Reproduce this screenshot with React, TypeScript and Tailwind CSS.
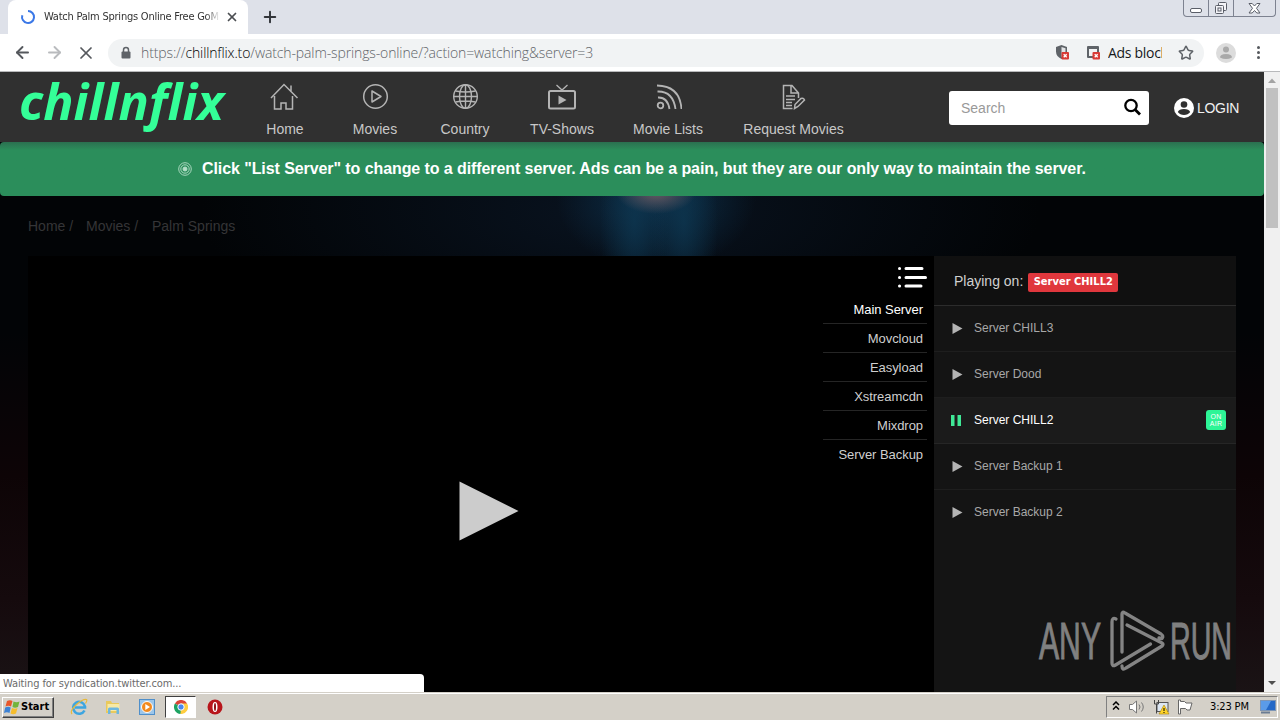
import type { ReactNode } from "react";
import { ArrowLeft, ArrowRight, Plus, Star, X } from "lucide-react";

const tahoma = "font-['DejaVu_Sans_Condensed','DejaVu_Sans',sans-serif] [font-stretch:condensed]";

const openSans = "font-['Open_Sans',sans-serif] [font-stretch:normal]";

function HomeIcon() {
  return (
    <svg width="30" height="28" viewBox="0 0 30 28" fill="none" stroke="#b4b4b4" strokeWidth="1.5">
      <path d="M1 15 14 1.500 27.500 15M4.500 13v13h6.500v-6h5v6h6.500V13M21 8V2.500" />
    </svg>
  );
}

function MoviesIcon() {
  return (
    <svg width="28" height="28" viewBox="0 0 28 28" fill="none" stroke="#b4b4b4" strokeWidth="1.500">
      <circle cx="14.500" cy="13.500" r="11.800" />
      <path d="M11 8v11l9-5.500z" strokeLinejoin="round" />
    </svg>
  );
}

function CountryIcon() {
  return (
    <svg width="28" height="28" viewBox="0 0 28 28" fill="none" stroke="#b4b4b4" strokeWidth="1.400">
      <circle cx="14.500" cy="13.500" r="11.800" />
      <ellipse cx="14.500" cy="13.500" rx="6" ry="11.800" />
      <path d="M14.500 1.500v24M2.500 13.500h24M4.500 8q10 2 20 0M4.500 19q10-2 20 0" />
    </svg>
  );
}

function TvIcon() {
  return (
    <svg width="30" height="28" viewBox="0 0 30 28" fill="none" stroke="#b4b4b4" strokeWidth="2">
      <rect x="2" y="8" width="26" height="17.500" rx="1.500" />
      <path d="M9.500 2 15 7l5.500-5" strokeWidth="1.300" />
      <path d="M11.500 12.500v9l8-4.500z" fill="#b4b4b4" stroke="none" />
    </svg>
  );
}

function FeedIcon() {
  return (
    <svg width="28" height="28" viewBox="0 0 28 28" fill="none" stroke="#b4b4b4" strokeWidth="1.800">
      <circle cx="6.500" cy="22.500" r="2.800" />
      <path d="M4 14.500q9.500-.500 11.500 11.500M3.500 8.500q15.500-.500 18 17.500M3 2.500q23 .500 24.500 23.500" />
    </svg>
  );
}

function RequestIcon() {
  return (
    <svg width="26" height="28" viewBox="0 0 26 28" fill="none" stroke="#b4b4b4" strokeWidth="1.500">
      <path d="M11.500 25.500H2.500v-23H11l6.500 7.500V15M10 2.500v7.500h7.500M5 13h9M5 16.500h9M5 19.500h6M5 22.500h6" />
      <path d="m13.500 25.500.500-4 6-6q2.500-1 3.500 1.500l-6.500 6.500z" />
    </svg>
  );
}

const navItems = [
  { label: "Home", icon: <HomeIcon />, width: "w-[90px]" },
  { label: "Movies", icon: <MoviesIcon />, width: "w-[90px]" },
  { label: "Country", icon: <CountryIcon />, width: "w-[90px]" },
  { label: "TV-Shows", icon: <TvIcon />, width: "w-[104px]" },
  { label: "Movie Lists", icon: <FeedIcon />, width: "w-[108px]" },
  { label: "Request Movies", icon: <RequestIcon />, width: "w-[143px]" },
];

const mirrors = ["Main Server", "Movcloud", "Easyload", "Xstreamcdn", "Mixdrop", "Server Backup"];

const servers = ["Server CHILL3", "Server Dood", "Server CHILL2", "Server Backup 1", "Server Backup 2"];

function WindowButtons() {
  return (
    <div className="mr-[4px] flex h-[17px] w-[93px] rounded-b-[4px] border border-t-0 border-[#7d8290]">
      <div className="flex w-[25px] items-end justify-center border-r border-[#7d8290] pb-[3px]">
        <div className="h-[5px] w-[12px] rounded-[2px] border border-[#5a5e68] bg-white" />
      </div>
      <div className="flex w-[25px] items-center justify-center border-r border-[#7d8290]">
        <svg width="14" height="13" viewBox="0 0 14 13" fill="#f4f4f8" stroke="#5a5e68">
          <rect x="4.500" y=".500" width="8" height="8" rx="1" />
          <rect x="1.500" y="3.500" width="8" height="8" rx="1" />
          <rect x="4" y="6" width="3" height="3" />
        </svg>
      </div>
      <div className="flex flex-1 items-center justify-center">
        <svg width="13" height="11" viewBox="0 0 13 11" fill="#fff" stroke="#5a5e68">
          <path d="M1 .5h3.200l2.300 2.500L8.800.5H12L8.500 5.300l3.500 4.700H8.800L6.500 7.500 4.200 10H1l3.500-4.700z" />
        </svg>
      </div>
    </div>
  );
}

function TabStrip() {
  return (
    <div className="flex h-[34px] shrink-0 items-start bg-[#dee1e9]">
      <div className={`ml-[8px] flex h-[34px] w-[240px] items-center rounded-t-[8px] bg-white pl-[12px] ${tahoma}`}>
        <svg width="16" height="16" viewBox="0 0 16 16" fill="none" stroke="#3b78e7" strokeWidth="2">
          <path d="M8 2a6 6 0 1 1-5.700 4.200" />
        </svg>
        <div className="ml-[8px] w-[176px] overflow-hidden text-[11px] tracking-[-0.23px] whitespace-nowrap text-[#333] [mask-image:linear-gradient(to_right,#000_92%,transparent)]">
          Watch Palm Springs Online Free GoM
        </div>
        <X className="ml-[5px] size-[14px] text-[#4b4e52]" strokeWidth={3} />
      </div>
      <Plus className="mt-[8px] ml-[13px] size-[18px] text-[#33363b]" strokeWidth={2.6} />
      <div className="flex-1" />
      <WindowButtons />
    </div>
  );
}

function BlockedBadge() {
  return (
    <g>
      <rect x="6.500" y="8" width="7.500" height="7.500" rx="1" fill="#d93a35" />
      <path d="m8.700 10.200 3 3m0-3-3 3" stroke="#fff" strokeWidth="1.300" />
    </g>
  );
}

function AddressBar() {
  return (
    <div className="flex h-[38px] shrink-0 items-center border-b border-[#b8b9bb] bg-white text-[#5f6368]">
      <ArrowLeft className="ml-[13px] size-[19px] text-[#55585d]" strokeWidth={2.4} />
      <ArrowRight className="ml-[13px] size-[19px] text-[#b9bbbe]" strokeWidth={2.4} />
      <X className="ml-[12px] size-[20px] text-[#55585d]" strokeWidth={2.1} />
      <div className="ml-[12px] flex h-[28px] w-[1096px] items-center rounded-full bg-[#f1f3f4] pl-[13px]">
        <svg width="10" height="14" viewBox="0 0 10 14">
          <path d="M2.500 6V4a2.500 2.500 0 0 1 5 0v2" fill="none" stroke="#5f6368" strokeWidth="1.500" />
          <rect x=".500" y="5.500" width="9" height="7" rx="1" fill="#5f6368" />
        </svg>
        <div className={`ml-[10px] w-[900px] text-[14px] font-light tracking-[-0.12px] whitespace-nowrap text-[#5f6368] ${openSans}`}>
          https://<span className="text-black">chillnflix.to</span>/watch-palm-springs-online/?action=watching&amp;server=3
        </div>
        <svg className="ml-[14px] shrink-0" width="16" height="17" viewBox="0 0 16 17">
          <path d="M6.500 1 1 3v4.500q0 5 5.500 7.500 5.500-2.500 5.500-7.500V3z" fill="#5f6368" />
          <path d="M6.500 3v10q4-2 4-6V4.300z" fill="#e2e4e6" />
          <BlockedBadge />
        </svg>
        <svg className="ml-[15px] shrink-0" width="16" height="17" viewBox="0 0 16 17">
          <path d="M1 3q0-1 1-1h10q1 0 1 1v6h-2V5H3v7h4v2H2q-1 0-1-1z" fill="#5f6368" />
          <BlockedBadge />
        </svg>
        <div className={`ml-[6px] w-[54px] shrink-0 overflow-hidden text-[14px] tracking-[-0.3px] whitespace-nowrap text-[#17191c] ${openSans}`}>
          Ads block
        </div>
        <Star className="ml-[16px] size-[16px] shrink-0" strokeWidth={2.3} />
      </div>
      <svg className="ml-[12px]" width="20" height="20" viewBox="0 0 20 20">
        <circle cx="10" cy="10" r="10" fill="#dcdcdc" />
        <circle cx="10" cy="6.500" r="3" fill="#a9a9a9" />
        <path d="M4 14.500q0-3.500 6-3.500t6 3.500q-6 3-12 0" fill="#a9a9a9" />
      </svg>
      <div className="ml-[21px] flex flex-col gap-[2px]">
        <i className="size-[3px] rounded-full bg-[#55585d]" />
        <i className="size-[3px] rounded-full bg-[#55585d]" />
        <i className="size-[3px] rounded-full bg-[#55585d]" />
      </div>
    </div>
  );
}

function Navbar() {
  return (
    <nav className="flex h-[70px] shrink-0 bg-[#303030]">
      <svg className="shrink-0 overflow-visible" width="240" height="70" viewBox="0 0 240 70">
        <text
          x="19"
          y="48"
          fill="#34ff98"
          fontFamily="Open Sans, sans-serif"
          fontSize="50"
          fontWeight="700"
          fontStyle="italic"
          textLength="205"
          lengthAdjust="spacingAndGlyphs"
        >
          chillnflix
        </text>
      </svg>
      {navItems.map((item) => (
        <a key={item.label} className={`flex shrink-0 flex-col items-center pt-[11px] ${item.width}`}>
          {item.icon}
          <span className="mt-[8px] text-[14px] leading-[20px] whitespace-nowrap text-[#c8c8c8]">{item.label}</span>
        </a>
      ))}
      <div className="mt-[19px] ml-[84px] flex h-[34px] w-[200px] items-center rounded-[3px] bg-white">
        <span className="ml-[12px] flex-1 text-[14px] text-[#999]">Search</span>
        <svg className="mr-[7px] mb-[2px]" width="20" height="20" viewBox="0 0 20 20" fill="none" stroke="#000">
          <circle cx="9" cy="8.500" r="5.700" strokeWidth="2.300" />
          <path d="m13 12.500 5 5" strokeWidth="2.800" />
        </svg>
      </div>
      <div className="mt-[2px] ml-[25px] flex items-center gap-[3px] text-[14px] tracking-[-0.3px] text-[#f0f0f0]">
        <svg width="20" height="20" viewBox="0 0 20 20">
          <circle cx="10" cy="10" r="10" fill="#fff" />
          <circle cx="10" cy="6.500" r="3.300" fill="#303030" />
          <path d="M3.800 14q1.200-3 6.200-3t6.200 3q-2.200 3-6.200 3t-6.200-3" fill="#303030" />
        </svg>
        LOGIN
      </div>
    </nav>
  );
}

function Notice() {
  return (
    <div className="flex h-[54px] shrink-0 items-center rounded-[4px] bg-linear-to-b from-[#2b7050] to-[#2b8e5b] to-15% pl-[178px] text-[16px] font-bold text-white">
      <svg className="mr-[10px]" width="14" height="14" viewBox="0 0 14 14" fill="none" stroke="#b5dfc8">
        <circle cx="7" cy="7" r="6.300" strokeWidth=".9" />
        <circle cx="7" cy="7" r="4.200" strokeWidth=".9" />
        <circle cx="7" cy="7" r="2" fill="#b5dfc8" />
      </svg>
      <span className="tracking-[-0.084px] whitespace-nowrap">
        Click "List Server" to change to a different server. Ads can be a pain, but they are our only way to maintain the server.
      </span>
    </div>
  );
}

function Player() {
  return (
    <div className="flex w-[906px] bg-black">
      <svg className="mt-[225px] ml-[431px]" width="60" height="60" viewBox="0 0 60 60">
        <path d="M.500.500v59l59-29.500z" fill="#ccc" />
      </svg>
      <div className="mt-[9px] mr-[7px] ml-auto flex w-[104px] flex-col items-end">
        <svg width="30" height="24" viewBox="0 0 30 24" fill="none" stroke="#fff" strokeWidth="3" strokeLinecap="round">
          <path d="M9 3.500h16M9 12.500h19.500M9 21h15" />
          <path d="M2.500 3.500h.1M2.500 12.500h.1M2.500 21h.1" />
        </svg>
        <ul className="mt-[6px] w-full text-right text-[13px] text-[#cfcfcf]">
          {mirrors.map((name) => (
            <li
              key={name}
              className="h-[29px] border-b border-[#252525] pr-[4px] leading-[30px] tracking-[-0.05px] whitespace-nowrap first:text-white last:border-0"
            >
              {name}
            </li>
          ))}
        </ul>
      </div>
    </div>
  );
}

function ServerRow({ name, active }: { name: string; active: boolean }) {
  return (
    <li
      className={`flex h-[46px] items-center border-b pr-[10px] pb-[2px] pl-[16px] text-[12px] ${
        active ? "border-[#262626] bg-[#1b1b1b] text-white" : "border-[#1e1e1e] text-[#a8a8a8] last:border-0"
      }`}
    >
      <svg className="mt-[2px] mr-[11px]" width="13" height="12" viewBox="0 0 13 12">
        {active ? (
          <path d="M1 0h3.500v11H1zM7.500 0H11v11H7.500z" fill="#3fe896" />
        ) : (
          <path d="M2.500 0v11l10-5.500z" fill="#b4b4b4" />
        )}
      </svg>
      <span className="flex-1 leading-[18px]">{name}</span>
      {active && (
        <span className="flex size-[20px] flex-col items-center justify-center rounded-[3px] bg-[#2df596] text-[7px] leading-[7px] tracking-[0.3px] text-white">
          <span>ON</span>
          <span>AIR</span>
        </span>
      )}
    </li>
  );
}

function Watermark() {
  return (
    <svg className="mt-auto mb-[18px] ml-[103px] overflow-visible" width="196" height="66" viewBox="0 0 196 66">
      <g
        fill="#808080"
        stroke="#808080"
        strokeWidth="1"
        fontFamily="Liberation Sans Narrow, Liberation Sans, sans-serif"
        fontSize="51"
      >
        <text x="2" y="51" textLength="62" lengthAdjust="spacingAndGlyphs">ANY</text>
        <text x="133" y="51" textLength="62" lengthAdjust="spacingAndGlyphs">RUN</text>
      </g>
      <g fill="none" stroke="#848484" strokeWidth="3.300" strokeLinejoin="round" strokeLinecap="round">
        <path d="M79 11q-4-2-4 3v41q0 4 3.500 2l35-21" />
        <path d="M85 44V6q0-3 3-1l36 21q3 2 1 4.500l-3-.5M90 17l35 18q2 1 0 3L89 60q-4 3-4-2" />
      </g>
    </svg>
  );
}

function ServerPanel() {
  return (
    <aside className="flex w-[302px] flex-col bg-[#141414]">
      <div className="flex h-[50px] shrink-0 items-center border-b border-[#2c2c2c] bg-[#101010] pl-[20px] text-[14px] text-[#d0d0d0]">
        <span className="mt-[2px]">Playing on:</span>
        <span className={`mt-[3px] ml-[5px] flex h-[19px] w-[90px] items-center justify-center rounded-[2px] bg-[#e0373d] text-[11px] font-bold tracking-[0.02px] text-white ${tahoma}`}>
          Server CHILL2
        </span>
      </div>
      <ul>
        {servers.map((name) => (
          <ServerRow key={name} name={name} active={name === "Server CHILL2"} />
        ))}
      </ul>
      <Watermark />
    </aside>
  );
}

function Scrollbar() {
  return (
    <div className="flex w-[16px] flex-col items-center bg-[#f0f0f0]">
      <svg className="h-[16px]" width="16" height="16" viewBox="0 0 16 16">
        <path d="M4 11h8L8 6.500z" fill="#a3a3a3" />
      </svg>
      <div className="h-[140px] w-[12px] bg-[#c1c1c1]" />
      <svg className="mt-auto" width="16" height="17" viewBox="0 0 16 17">
        <path d="M4 6h8l-4 4z" fill="#505050" />
      </svg>
    </div>
  );
}

function TaskButton({ children }: { children: ReactNode }) {
  return <div className="flex h-[22px] w-[34px] items-center justify-center">{children}</div>;
}

function Taskbar() {
  return (
    <div className={`flex h-[28px] shrink-0 items-center border-t border-[#d4d0c8] bg-[#d4d0c8] text-[11px] text-black shadow-[inset_0_1px_0_#fff] ${tahoma}`}>
      <div className="mt-[1px] ml-[2px] flex h-[21px] w-[52px] items-center border border-t-white border-r-[#404040] border-b-[#404040] border-l-white pl-[1px] font-bold shadow-[inset_-1px_-1px_0_#808080]">
        <svg className="mr-[1px] shrink-0" width="16" height="16" viewBox="0 0 16 16">
          <path d="M3 2q3-1.500 5.500 0L7 7.500Q4.500 6 1.500 7.500z" fill="#e8562a" />
          <path d="M9.500 2.500q3 1.500 6 0L14 8q-3 1.500-5.500 0z" fill="#73b43c" />
          <path d="M1.200 8.500q3-1.500 5.500 0L5.500 14Q3 12.500 0 14z" fill="#3d82d4" />
          <path d="M8 9q3 1.500 5.500 0L12 14.500q-3 1.500-5.500 0z" fill="#f6bd2c" />
        </svg>
        <span>Start</span>
      </div>
      <div className="ml-[8px] flex items-center">
        <TaskButton>
          <svg width="18" height="18" viewBox="0 0 18 18" fill="none">
            <path d="M14.500 12.500A6 6 0 1 1 15 8.500v1H5" stroke="#3da5e0" strokeWidth="2.600" />
            <path d="M2 16Q-.5 13 6 7t10.500-5.500q1 1-1 4" stroke="#e8b93a" strokeWidth="1.200" />
          </svg>
        </TaskButton>
        <TaskButton>
          <svg width="18" height="18" viewBox="0 0 18 18">
            <path d="M2 3h5l1 2h7v10H2z" fill="#e9c95c" />
            <path d="M3.500 6h12v7h-12z" fill="#f8e9a4" />
            <path d="M4 16v-5q0-1.500 1.500-1.500h8q1.500 0 1.500 1.500v5h-2.500v-4h-6v4z" fill="#6db7df" />
          </svg>
        </TaskButton>
        <TaskButton>
          <svg width="16" height="16" viewBox="0 0 16 16">
            <rect x=".5" y=".5" width="15" height="15" fill="#9cc6ea" stroke="#4f8fca" />
            <circle cx="8" cy="8" r="5.500" fill="#f28a1e" stroke="#fff" />
            <path d="M6.300 5v6l4.700-3z" fill="#fff" />
          </svg>
        </TaskButton>
        <div className="mr-[2px] ml-[1px] flex h-[22px] w-[31px] items-center justify-center border border-t-[#404040] border-r-white border-b-white border-l-[#404040] bg-white">
          <svg width="14" height="14" viewBox="0 0 14 14">
            <path d="M7 7 .9 3.500A7 7 0 0 1 13.100 3.500z" fill="#dc4437" />
            <path d="M7 7 .9 3.500A7 7 0 0 0 6.500 14L9.600 8.500z" fill="#1ea362" />
            <path d="M7 7 6.500 14A7 7 0 0 0 13.100 3.500H7z" fill="#ffcd40" />
            <circle cx="7" cy="7" r="3.200" fill="#4a87ee" stroke="#fff" />
          </svg>
        </div>
        <TaskButton>
          <svg width="16" height="16" viewBox="0 0 16 16">
            <circle cx="8" cy="8" r="7.500" fill="#b8151b" />
            <ellipse cx="8" cy="8" rx="2.500" ry="5" fill="#fff" />
            <ellipse cx="8" cy="8" rx="1" ry="4" fill="#8c0d12" />
          </svg>
        </TaskButton>
      </div>
      <div className="mt-[1px] mr-[2px] ml-auto flex h-[22px] w-[172px] items-center border border-t-[#808080] border-r-white border-b-white border-l-[#808080]">
        <svg className="mb-[2px] ml-[5px]" width="8" height="10" viewBox="0 0 8 10" fill="none" stroke="#000" strokeWidth="1.500">
          <path d="m1 4 3-3 3 3M1 8.500l3-3 3 3" />
        </svg>
        <svg className="ml-[8px]" width="18" height="16" viewBox="0 0 18 16" fill="none" stroke="#777">
          <path d="M1.500 5.500h3L8.500 2v12l-4-3.500h-3z" fill="#fff" />
          <path d="M11 5.500q2 2.500 0 5M13.500 3.500q3.500 4.500 0 9" />
        </svg>
        <svg className="ml-[7px]" width="17" height="16" viewBox="0 0 17 16">
          <rect x="4" y="3.500" width="11" height="9" fill="#dce6f2" stroke="#555" />
          <path d="M1.500 1v4h4V1M3.500 5v9.500" fill="none" stroke="#444" />
          <path d="m11 6 5 9H6z" fill="#ffd429" stroke="#a98208" strokeWidth=".6" />
          <path d="M11 9v3M11 13v1" stroke="#000" />
        </svg>
        <svg className="ml-[7px]" width="17" height="16" viewBox="0 0 17 16" fill="#fff" stroke="#666">
          <path d="M1.500 1v14h2V9.500h5l1.500 1.500h3l2-7h-6L7.500 2.500h-4V1z" />
        </svg>
        <span className="ml-[16px] w-[40px] text-[11px] tracking-[-0.15px] whitespace-nowrap">3:23 PM</span>
        <svg className="ml-[10px] shrink-0" width="16" height="14" viewBox="0 0 16 14">
          <rect x=".5" y=".5" width="15" height="10" fill="#2569c7" stroke="#7d95b5" />
          <path d="M1 1h10L6 10H1z" fill="#5b9be8" />
          <path d="M1 12.500h9" stroke="#6b7c93" strokeWidth="2" />
        </svg>
      </div>
    </div>
  );
}

export default function App() {
  return (
    <div className="relative flex h-[720px] w-[1280px] flex-col overflow-hidden bg-black font-['Liberation_Sans',Arial,sans-serif]">
      <TabStrip />
      <AddressBar />
      <div className="flex h-[620px] shrink-0">
        <main className="flex w-[1264px] flex-col bg-[#020406] bg-[radial-gradient(ellipse_40px_22px_at_656px_120px,#6a5a62_0%,transparent_100%),radial-gradient(ellipse_34px_100px_at_634px_150px,#0e3a55aa_0%,transparent_100%),radial-gradient(ellipse_34px_100px_at_684px_150px,#0e3a55aa_0%,transparent_100%),radial-gradient(ellipse_100px_75px_at_656px_125px,#0c304a_0%,transparent_100%),radial-gradient(ellipse_420px_150px_at_620px_140px,#091320_0%,transparent_100%),linear-gradient(to_bottom,transparent_42%,#0d0406_65%,#150a0d_85%,#1a1315_100%)]">
          <Navbar />
          <Notice />
          <div className="flex h-[60px] shrink-0 items-center pl-[28px] text-[14px] whitespace-nowrap text-[#353537]">
            <span className="w-[58px]">Home /</span>
            <span className="w-[66px]">Movies /</span>
            <span>Palm Springs</span>
          </div>
          <div className="ml-[28px] flex flex-1">
            <Player />
            <ServerPanel />
          </div>
        </main>
        <Scrollbar />
      </div>
      <Taskbar />
      <div className={`absolute top-[674px] left-0 h-[18px] w-[424px] rounded-tr-[4px] bg-white pl-[3px] text-[11px] leading-[20px] tracking-[-0.1px] text-[#6b6b6b] ${tahoma}`}>
        Waiting for syndication.twitter.com...
      </div>
    </div>
  );
}
